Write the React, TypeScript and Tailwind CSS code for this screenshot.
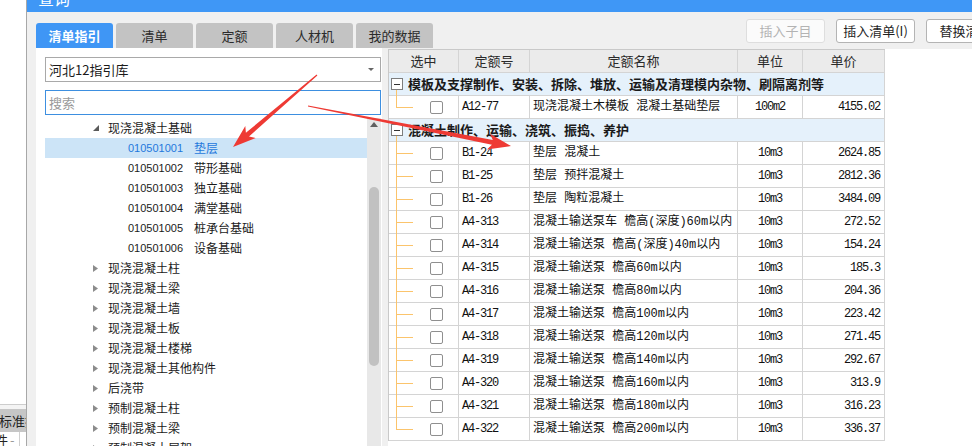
import React from 'react';

type TreeRow = { level: 1 | 2; text: string; code?: string; open?: boolean; selected?: boolean };

const treeRows: TreeRow[] = [
    { level: 1, text: '现浇混凝土基础', open: true },
    { level: 2, code: '010501001', text: '垫层', selected: true },
    { level: 2, code: '010501002', text: '带形基础' },
    { level: 2, code: '010501003', text: '独立基础' },
    { level: 2, code: '010501004', text: '满堂基础' },
    { level: 2, code: '010501005', text: '桩承台基础' },
    { level: 2, code: '010501006', text: '设备基础' },
    { level: 1, text: '现浇混凝土柱' },
    { level: 1, text: '现浇混凝土梁' },
    { level: 1, text: '现浇混凝土墙' },
    { level: 1, text: '现浇混凝土板' },
    { level: 1, text: '现浇混凝土楼梯' },
    { level: 1, text: '现浇混凝土其他构件' },
    { level: 1, text: '后浇带' },
    { level: 1, text: '预制混凝土柱' },
    { level: 1, text: '预制混凝土梁' },
    { level: 1, text: '预制混凝土屋架' },
];

type Item = { code: string; name: string; unit: string; price: string };
type Group = { title: string; items: Item[] };

const groups: Group[] = [
    {
        title: '模板及支撑制作、安装、拆除、堆放、运输及清理模内杂物、刷隔离剂等',
        items: [{ code: 'A12-77', name: '现浇混凝土木模板 混凝土基础垫层', unit: '100m2', price: '4155.02' }],
    },
    {
        title: '混凝土制作、运输、浇筑、振捣、养护',
        items: [
            { code: 'B1-24', name: '垫层 混凝土', unit: '10m3', price: '2624.85' },
            { code: 'B1-25', name: '垫层 预拌混凝土', unit: '10m3', price: '2812.36' },
            { code: 'B1-26', name: '垫层 陶粒混凝土', unit: '10m3', price: '3484.09' },
            { code: 'A4-313', name: '混凝土输送泵车 檐高(深度)60m以内', unit: '10m3', price: '272.52' },
            { code: 'A4-314', name: '混凝土输送泵 檐高(深度)40m以内', unit: '10m3', price: '154.24' },
            { code: 'A4-315', name: '混凝土输送泵 檐高60m以内', unit: '10m3', price: '185.3' },
            { code: 'A4-316', name: '混凝土输送泵 檐高80m以内', unit: '10m3', price: '204.36' },
            { code: 'A4-317', name: '混凝土输送泵 檐高100m以内', unit: '10m3', price: '223.42' },
            { code: 'A4-318', name: '混凝土输送泵 檐高120m以内', unit: '10m3', price: '271.45' },
            { code: 'A4-319', name: '混凝土输送泵 檐高140m以内', unit: '10m3', price: '292.67' },
            { code: 'A4-320', name: '混凝土输送泵 檐高160m以内', unit: '10m3', price: '313.9' },
            { code: 'A4-321', name: '混凝土输送泵 檐高180m以内', unit: '10m3', price: '316.23' },
            { code: 'A4-322', name: '混凝土输送泵 檐高200m以内', unit: '10m3', price: '336.37' },
        ],
    },
];

const cols = 'grid grid-cols-[70px_71px_208px_65px_82px]';
const mono = "font-['Liberation_Mono',monospace] text-[12px] tracking-[-1.2px]";

function SideStrip() {
    return (
        <div className="flex w-[26px] shrink-0 flex-col overflow-hidden bg-white">
            <div className="flex-1" />
            <div className="h-px bg-[#cdcdcd]" />
            <div className="h-[4px] bg-[#f4f4f4]" />
            <div className="flex h-[23px] items-center overflow-hidden whitespace-nowrap bg-[#c6c6c6] text-[13px] text-[#222]">
                <span className="-ml-px">标准换算</span>
            </div>
            <div className="flex h-[14px] items-center overflow-hidden whitespace-nowrap text-[13px] leading-none text-[#222]">
                <span className="-ml-[5px]">件</span>
                <span className="ml-[2px] text-[#999]">-</span>
                <span className="ml-[4px] h-full w-px bg-[#d0d0d0]" />
            </div>
        </div>
    );
}

function Toolbar() {
    const tabs = ['清单指引', '清单', '定额', '人材机', '我的数据'];
    return (
        <div className="flex h-[36px] shrink-0 overflow-hidden pl-[9px]">
            <div className="flex items-end gap-[3px]">
                {tabs.map((t, i) => (
                    <div
                        key={t}
                        className={
                            i === 0
                                ? 'flex h-[25px] w-[77px] items-center justify-center rounded-t-[3px] bg-[#3f96f5] text-[13px] font-bold text-white'
                                : 'flex h-[25px] w-[77px] items-center justify-center rounded-t-[3px] bg-[#c3c3c3] text-[13px] text-[#2b2b2b]'
                        }
                    >
                        {t}
                    </div>
                ))}
            </div>
            <div className="ml-[313px] flex shrink-0 items-start gap-[11px] pt-[7px]">
                <div className="flex h-[24px] w-[79px] shrink-0 items-center justify-center rounded-[3px] border border-[#dedede] bg-[#fbfbfb] text-[13px] text-[#b3b3b3]">
                    插入子目
                </div>
                <div className="flex h-[24px] w-[79px] shrink-0 items-center justify-center rounded-[3px] border border-[#b4b4b4] bg-white text-[13px] text-[#1f1f1f]">
                    插入清单(I)
                </div>
                <div className="flex h-[24px] w-[79px] shrink-0 items-center justify-center rounded-[3px] border border-[#b4b4b4] bg-white text-[13px] text-[#1f1f1f]">
                    替换清单
                </div>
            </div>
        </div>
    );
}

function TreeItem({ row }: { row: TreeRow }) {
    if (row.level === 1) {
        return (
            <div className="flex h-[20px] items-center whitespace-nowrap text-[12px] text-[#1a1a1a]">
                <span className="ml-[48px] flex w-[15px] items-center">
                    {row.open ? (
                        <svg width="6" height="6" viewBox="0 0 6 6">
                            <polygon points="6,0 6,6 0,6" fill="#5a5a5a" />
                        </svg>
                    ) : (
                        <svg width="5" height="7" viewBox="0 0 5 7">
                            <polygon points="0,0 5,3.5 0,7" fill="#8c8c8c" />
                        </svg>
                    )}
                </span>
                <span>{row.text}</span>
            </div>
        );
    }
    return (
        <div
            className={
                row.selected
                    ? 'flex h-[20px] items-center whitespace-nowrap bg-[#cce4f7] text-[#1f78dc]'
                    : 'flex h-[20px] items-center whitespace-nowrap text-[#1a1a1a]'
            }
        >
            <span className="ml-[83px] w-[66px] font-['Liberation_Sans',sans-serif] text-[11px]">{row.code}</span>
            <span className="text-[12px]">{row.text}</span>
        </div>
    );
}

function GuidePanel() {
    return (
        <div className="flex w-[346px] shrink-0 flex-col bg-white">
            <div className="ml-[9px] mt-[9px] flex h-[25px] w-[336px] items-center justify-between border border-[#a9a9a9] bg-white pl-[3px] pr-[6px] text-[13px] text-[#1a1a1a]">
                <span>河北12指引库</span>
                <svg width="6" height="3" viewBox="0 0 6 3">
                    <polygon points="0,0 6,0 3,3" fill="#666" />
                </svg>
            </div>
            <div className="ml-[9px] mt-[8px] flex h-[25px] w-[336px] items-center border border-[#3d8fe0] bg-white pl-[3px] text-[13px] text-[#9a9a9a]">
                搜索
            </div>
            <div className="mt-[3px] flex min-h-0 flex-1">
                <div className="min-w-0 flex-1 overflow-hidden pl-[9px]">
                    {treeRows.map((r, i) => (
                        <TreeItem key={i} row={r} />
                    ))}
                </div>
                <div className="mr-px flex w-[14px] shrink-0 flex-col items-center bg-[#e8e8e8]">
                    <svg className="mt-[4px]" width="8" height="5" viewBox="0 0 8 5">
                        <polygon points="0,5 4,0 8,5" fill="#606060" />
                    </svg>
                    <div className="mt-[60px] h-[179px] w-[10px] rounded-full bg-[#c1c1c1]" />
                </div>
            </div>
        </div>
    );
}

function GroupRow({ title }: { title: string }) {
    return (
        <div className="relative flex h-[23px] w-[496px] items-center border-b border-r border-[#d4d4d4] bg-[#e5f1fb]">
            <div className="ml-[2px] flex h-[12px] w-[12px] items-center justify-center border border-[#7d7d7d] bg-white">
                <div className="h-px w-[6px] bg-[#333]" />
            </div>
            <div className="absolute bottom-[-1px] left-[7px] top-[17px] w-px bg-[#fbc46c]" />
            <span className="ml-[5px] whitespace-nowrap text-[13px] font-bold text-[#1a1a1a]">{title}</span>
        </div>
    );
}

function ItemRow({ item, last }: { item: Item; last: boolean }) {
    return (
        <div className={`${cols} h-[23px] border-b border-[#d4d4d4] text-[#111]`}>
            <div className="relative flex items-center border-r border-[#d4d4d4] pl-[41px]">
                <div className={last ? 'absolute left-[7px] top-0 h-[11px] w-px bg-[#fbc46c]' : 'absolute bottom-[-1px] left-[7px] top-0 w-px bg-[#fbc46c]'} />
                <div className="absolute left-[7px] top-[11px] h-px w-[17px] bg-[#fbc46c]" />
                <div className="h-[13px] w-[13px] rounded-[2px] border border-[#8f8f8f] bg-white" />
            </div>
            <div className={`flex items-center border-r border-[#d4d4d4] pl-[3px] ${mono}`}>{item.code}</div>
            <div className="flex items-center overflow-hidden whitespace-nowrap border-r border-[#d4d4d4] pl-[3px] font-['Liberation_Mono','Noto_Sans_CJK_SC',monospace] text-[12px]">
                {item.name}
            </div>
            <div className={`flex items-center justify-center border-r border-[#d4d4d4] ${mono}`}>{item.unit}</div>
            <div className={`flex items-center justify-end border-r border-[#d4d4d4] pr-[4px] ${mono}`}>{item.price}</div>
        </div>
    );
}

function QuotaTable() {
    const heads = ['选中', '定额号', '定额名称', '单位', '单价'];
    return (
        <div className="ml-[6px] mt-px min-w-0 flex-1 overflow-hidden bg-white">
            <div className="w-[497px] border-l border-t border-[#c9c9c9]">
                <div className={`${cols} h-[23px] border-b border-[#d4d4d4] bg-[#ebebeb]`}>
                    {heads.map((h) => (
                        <div key={h} className="flex items-center justify-center border-r border-[#d4d4d4] text-[13px] text-[#2a2a2a]">
                            {h}
                        </div>
                    ))}
                </div>
                {groups.map((g) => (
                    <div key={g.title}>
                        <GroupRow title={g.title} />
                        {g.items.map((it, i) => (
                            <ItemRow key={it.code} item={it} last={i === g.items.length - 1} />
                        ))}
                    </div>
                ))}
            </div>
        </div>
    );
}

function arrowPoints(x1: number, y1: number, x2: number, y2: number) {
    const len = Math.hypot(x2 - x1, y2 - y1);
    const dx = (x2 - x1) / len;
    const dy = (y2 - y1) / len;
    const nx = -dy;
    const ny = dx;
    const head = 23;
    const bx = x2 - dx * head;
    const by = y2 - dy * head;
    const nbx = x2 - dx * (head - 4);
    const nby = y2 - dy * (head - 4);
    const p = (x: number, y: number) => `${x.toFixed(1)},${y.toFixed(1)}`;
    return [
        p(x1 + nx * 0.6, y1 + ny * 0.6),
        p(nbx + nx * 2.4, nby + ny * 2.4),
        p(bx + nx * 8, by + ny * 8),
        p(x2, y2),
        p(bx - nx * 8, by - ny * 8),
        p(nbx - nx * 2.4, nby - ny * 2.4),
        p(x1 - nx * 0.6, y1 - ny * 0.6),
    ].join(' ');
}

function Arrows() {
    return (
        <svg className="pointer-events-none absolute left-0 top-0" width="972" height="446" viewBox="0 0 972 446">
            <polygon points={arrowPoints(317, 75, 233, 147)} fill="#ee3a34" />
            <polygon points={arrowPoints(308, 106, 511, 146)} fill="#ee3a34" />
        </svg>
    );
}

export default function App() {
    return (
        <div className="relative flex h-[446px] w-[972px] overflow-hidden bg-white font-['Noto_Sans_CJK_SC',sans-serif] text-[12px] text-[#1f1f1f]">
            <SideStrip />
            <div className="flex min-w-0 flex-1 flex-col border-l border-[#a8a8a8] bg-[#f0f0f0]">
                <div className="h-[12px] shrink-0 overflow-hidden bg-[#3f97f6] pl-[11px]">
                    <div className="-mt-[12px] text-[16px] leading-[20px] text-white">查询</div>
                </div>
                <Toolbar />
                <div className="flex min-h-0 flex-1 pl-[9px]">
                    <GuidePanel />
                    <QuotaTable />
                </div>
            </div>
            <Arrows />
        </div>
    );
}
